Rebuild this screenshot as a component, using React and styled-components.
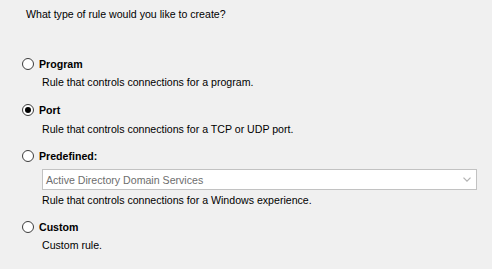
import React from "react";
import styled, { createGlobalStyle } from "styled-components";

const Global = createGlobalStyle`
  html, body { margin: 0; padding: 0; background: #f0f0f0; }
  body { font-family: "Liberation Sans", Arial, sans-serif; font-size: 10.6px; color: #000; }
`;

const Page = styled.div`
  width: 492px;
  height: 269px;
  box-sizing: border-box;
  padding: 6px 0 0 26px;
  overflow: hidden;
`;

const Question = styled.div`
  line-height: 16px;
  margin-bottom: 34px;
`;

const Options = styled.div`
  display: flex;
  flex-direction: column;
  gap: 11px;
`;

const Option = styled.div`
  display: flex;
  flex-direction: column;
  margin-top: ${(p) => p.$shift || 0}px;
`;

const LabelRow = styled.label`
  display: flex;
  align-items: center;
  gap: 5px;
  height: 16px;
  margin-left: -4px;
  cursor: default;
`;

const RadioCircle = styled.span`
  width: 12px;
  height: 12px;
  box-sizing: border-box;
  border-radius: 50%;
  border: 1px solid #3c3c3c;
  background: #fff;
  display: flex;
  align-items: center;
  justify-content: center;
  flex: none;
  &::after {
    content: "";
    width: 6px;
    height: 6px;
    border-radius: 50%;
    background: #000;
    display: ${(p) => (p.$checked ? "block" : "none")};
  }
`;

const LabelText = styled.span`
  font-weight: 700;
  line-height: 16px;
`;

const Desc = styled.div`
  margin-left: 16px;
  margin-top: ${(p) => p.$top}px;
  line-height: 16px;
`;

const Select = styled.div`
  margin: 5px 0 0 16px;
  width: 435px;
  height: 21px;
  box-sizing: border-box;
  border: 1px solid #c2c2c2;
  background: #fff;
  display: flex;
  align-items: center;
  justify-content: space-between;
  padding: 0 5px 0 3px;
  color: #6d6d6d;
`;

const Chevron = () => (
  <svg width="8" height="5" viewBox="0 0 8 5">
    <path d="M0.5 0.6 L4 4.1 L7.5 0.6" fill="none" stroke="#b4b4b4" strokeWidth="1.3" />
  </svg>
);

const options = [
  { key: "program", label: "Program", desc: "Rule that controls connections for a program." },
  { key: "port", label: "Port", desc: "Rule that controls connections for a TCP or UDP port.", checked: true, shift: 1, descTop: 3 },
  { key: "predefined", label: "Predefined:", desc: "Rule that controls connections for a Windows experience.", select: "Active Directory Domain Services" },
  { key: "custom", label: "Custom", desc: "Custom rule." },
];

export default function App() {
  return (
    <Page>
      <Global />
      <Question>What type of rule would you like to create?</Question>
      <Options>
        {options.map((o) => (
          <Option key={o.key} $shift={o.shift}>
            <LabelRow>
              <RadioCircle $checked={o.checked} />
              <LabelText>{o.label}</LabelText>
            </LabelRow>
            {o.select && (
              <Select>
                <span>{o.select}</span>
                <Chevron />
              </Select>
            )}
            <Desc $top={o.descTop || 2}>{o.desc}</Desc>
          </Option>
        ))}
      </Options>
    </Page>
  );
}
